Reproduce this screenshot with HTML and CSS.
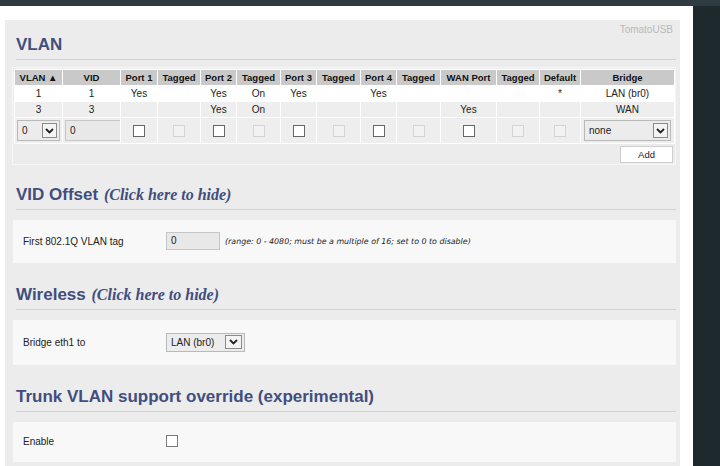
FILE: index.html
```html
<!DOCTYPE html>
<html lang="en">

<head>
   <meta charset="UTF-8">
   <title>VLAN</title>
   <link rel="stylesheet" href="styles.css">
</head>

<body>
   <div class="page">
      <div class="content">
         <div class="brand">TomatoUSB</div>

         <h3 class="section-title">VLAN</h3>
         <div class="section vlan-box">
            <table class="vlan-grid">
               <colgroup>
                  <col style="width: 48px"><col style="width: 58px">
                  <col style="width: 37px"><col style="width: 43px">
                  <col style="width: 36px"><col style="width: 44px">
                  <col style="width: 36px"><col style="width: 44px">
                  <col style="width: 36px"><col style="width: 44px">
                  <col style="width: 56px"><col style="width: 43px">
                  <col style="width: 41px"><col style="width: 94px">
               </colgroup>
               <thead>
                  <tr>
                     <th>VLAN &#9650;</th><th>VID</th>
                     <th>Port 1</th><th>Tagged</th>
                     <th>Port 2</th><th>Tagged</th>
                     <th>Port 3</th><th>Tagged</th>
                     <th>Port 4</th><th>Tagged</th>
                     <th>WAN Port</th><th>Tagged</th>
                     <th>Default</th><th>Bridge</th>
                  </tr>
               </thead>
               <tbody>
                  <tr class="odd">
                     <td>1</td><td>1</td>
                     <td>Yes</td><td></td>
                     <td>Yes</td><td>On</td>
                     <td>Yes</td><td></td>
                     <td>Yes</td><td></td>
                     <td></td><td></td>
                     <td>*</td><td>LAN (br0)</td>
                  </tr>
                  <tr class="even">
                     <td>3</td><td>3</td>
                     <td></td><td></td>
                     <td>Yes</td><td>On</td>
                     <td></td><td></td>
                     <td></td><td></td>
                     <td>Yes</td><td></td>
                     <td></td><td>WAN</td>
                  </tr>
                  <tr class="edit">
                     <td class="left">
                        <span class="select sel-vlan"><span class="select-val">0</span><span class="select-btn"><svg width="9" height="6" viewBox="0 0 9 6"><path d="M1 1l3.5 3.5L8 1" fill="none" stroke="#222" stroke-width="1.8"/></svg></span></span>
                     </td>
                     <td class="left"><span class="text-input vid-input">0</span></td>
                     <td><input type="checkbox" class="check"></td>
                     <td><input type="checkbox" class="check" disabled></td>
                     <td><input type="checkbox" class="check"></td>
                     <td><input type="checkbox" class="check" disabled></td>
                     <td><input type="checkbox" class="check"></td>
                     <td><input type="checkbox" class="check" disabled></td>
                     <td><input type="checkbox" class="check"></td>
                     <td><input type="checkbox" class="check" disabled></td>
                     <td><input type="checkbox" class="check"></td>
                     <td><input type="checkbox" class="check" disabled></td>
                     <td><input type="checkbox" class="check" disabled></td>
                     <td class="left">
                        <span class="select sel-bridge"><span class="select-val">none</span><span class="select-btn"><svg width="9" height="6" viewBox="0 0 9 6"><path d="M1 1l3.5 3.5L8 1" fill="none" stroke="#222" stroke-width="1.8"/></svg></span></span>
                     </td>
                  </tr>
               </tbody>
            </table>
            <div class="add-row">
               <button class="add-button">Add</button>
            </div>
         </div>

         <h3 class="section-title first">VID Offset <span class="toggle">(Click here to hide)</span></h3>
         <div class="section">
            <div class="field">
               <span class="field-label">First 802.1Q VLAN tag</span>
               <span class="text-input offset-input">0</span>
               <span class="hint">(range: 0 - 4080; must be a multiple of 16; set to 0 to disable)</span>
            </div>
         </div>

         <h3 class="section-title">Wireless <span class="toggle">(Click here to hide)</span></h3>
         <div class="section">
            <div class="field tall">
               <span class="field-label">Bridge eth1 to</span>
               <span class="select sel-wl"><span class="select-val">LAN (br0)</span><span class="select-btn"><svg width="9" height="6" viewBox="0 0 9 6"><path d="M1 1l3.5 3.5L8 1" fill="none" stroke="#222" stroke-width="1.8"/></svg></span></span>
            </div>
         </div>

         <h3 class="section-title">Trunk VLAN support override (experimental)</h3>
         <div class="section compact">
            <div class="field">
               <span class="field-label">Enable</span>
               <input type="checkbox" class="check">
            </div>
         </div>
      </div>
   </div>
</body>

</html>
```

FILE: styles.css
```css
body {
   margin: 0;
   background-color: #1e292e;
   background-image: linear-gradient(180deg, #2e3b41 0, #2e3b41 6px, transparent 6px);
   font-family: "Liberation Sans", Arial, sans-serif;
   font-size: 10px;
   color: #222;
}

.page {
   width: 693px;
   height: 460px;
   margin-top: 6px;
   padding-top: 14px;
   box-sizing: border-box;
   background-color: #fff;
   overflow: hidden;
}

.content {
   margin-left: 5px;
   width: 675px;
   height: 100%;
   padding: 5px 4px 0 8px;
   box-sizing: border-box;
   background-color: #ececec;
}

.brand {
   text-align: right;
   font-size: 10px;
   line-height: 10px;
   color: #b9b9b9;
   padding-right: 3px;
}

.section-title {
   margin: 22px 0 0 3px;
   padding-bottom: 4px;
   border-bottom: 1px solid #d2d2d2;
   font-size: 17px;
   line-height: 20px;
   font-weight: bold;
   color: #414e7e;
}

.brand + .section-title {
   margin-top: 0;
}

.section-title.first {
   margin-top: 20px;
}

.toggle {
   margin-left: 1px;
   font-family: "Liberation Serif", "Times New Roman", serif;
   font-style: italic;
   font-size: 16px;
}

.section {
   margin-top: 10px;
   background-color: #f8f8f8;
   padding: 12px 10px 13px;
}

.section.compact {
   padding: 13px 10px 15px;
}

.section.compact .field {
   min-height: 12px;
}

.vlan-box {
   margin: 7px 0 0 -1px;
   padding: 1px 1px 0;
   background-color: #ececec;
   border: 1px solid #f6f6f6;
}

.vlan-grid {
   width: 660px;
   table-layout: fixed;
   border-collapse: collapse;
}

.vlan-grid th,
.vlan-grid td {
   border: 1px solid #fff;
   padding: 0;
   text-align: center;
   white-space: nowrap;
   overflow: hidden;
}

.vlan-grid th {
   height: 15px;
   background-color: #c9c9c9;
   font-size: 9.5px;
   color: #111;
}

.vlan-grid td {
   height: 15px;
   font-size: 10px;
}

.vlan-grid .odd td {
   background-color: #fff;
}

.vlan-grid .even td,
.vlan-grid .edit td {
   background-color: #eeeeee;
}

.vlan-grid .edit td {
   height: 25px;
}

.vlan-grid td.left {
   text-align: left;
   padding-left: 1px;
}

.check {
   appearance: none;
   -webkit-appearance: none;
   width: 12px;
   height: 12px;
   margin: 0;
   vertical-align: middle;
   border: 1px solid #666;
   background-color: #fff;
}

.check:disabled {
   border-color: #d4d4d4;
   background-color: #f2f2f2;
}

.field .check {
   border-color: #7a7a7a;
}

.select {
   display: inline-flex;
   align-items: center;
   justify-content: space-between;
   box-sizing: border-box;
   border: 1px solid #b9b9b9;
   background-color: #ececec;
   padding: 0 2px 0 4px;
   vertical-align: middle;
   font-size: 10px;
}

.select-btn {
   display: flex;
   align-items: center;
   justify-content: center;
   box-sizing: border-box;
   border: 1px solid #8a8a8a;
   background-color: #f4f4f4;
}

.sel-vlan {
   width: 43px;
   height: 21px;
   margin-left: 1px;
}

.sel-vlan .select-btn,
.sel-bridge .select-btn {
   width: 15px;
   height: 15px;
}

.sel-bridge {
   width: 87px;
   height: 21px;
   margin-left: 2px;
}

.sel-wl {
   width: 79px;
   height: 19px;
}

.sel-wl .select-btn {
   width: 17px;
   height: 14px;
}

.text-input {
   display: inline-block;
   box-sizing: border-box;
   border: 1px solid #c6c6c6;
   background-color: #e8e8e8;
   padding-left: 4px;
   vertical-align: middle;
}

.vid-input {
   width: 60px;
   height: 21px;
   line-height: 19px;
   margin-left: 1px;
}

.offset-input {
   width: 54px;
   height: 18px;
   line-height: 16px;
}

.add-row {
   display: flex;
   justify-content: flex-end;
   padding: 2px 1px 1px 0;
}

.add-button {
   width: 53px;
   height: 17px;
   padding: 0;
   border: 1px solid #cfcfcf;
   background-color: #fff;
   font-family: "Liberation Sans", Arial, sans-serif;
   font-size: 9.5px;
   color: #222;
}

.field {
   display: flex;
   align-items: center;
   min-height: 18px;
}

.field.tall {
   min-height: 20px;
}

.field-label {
   width: 143px;
   flex-shrink: 0;
}

.hint {
   margin-left: 5px;
   font-family: "DejaVu Sans", sans-serif;
   font-size: 7.9px;
   font-style: italic;
   color: #222;
}
```
